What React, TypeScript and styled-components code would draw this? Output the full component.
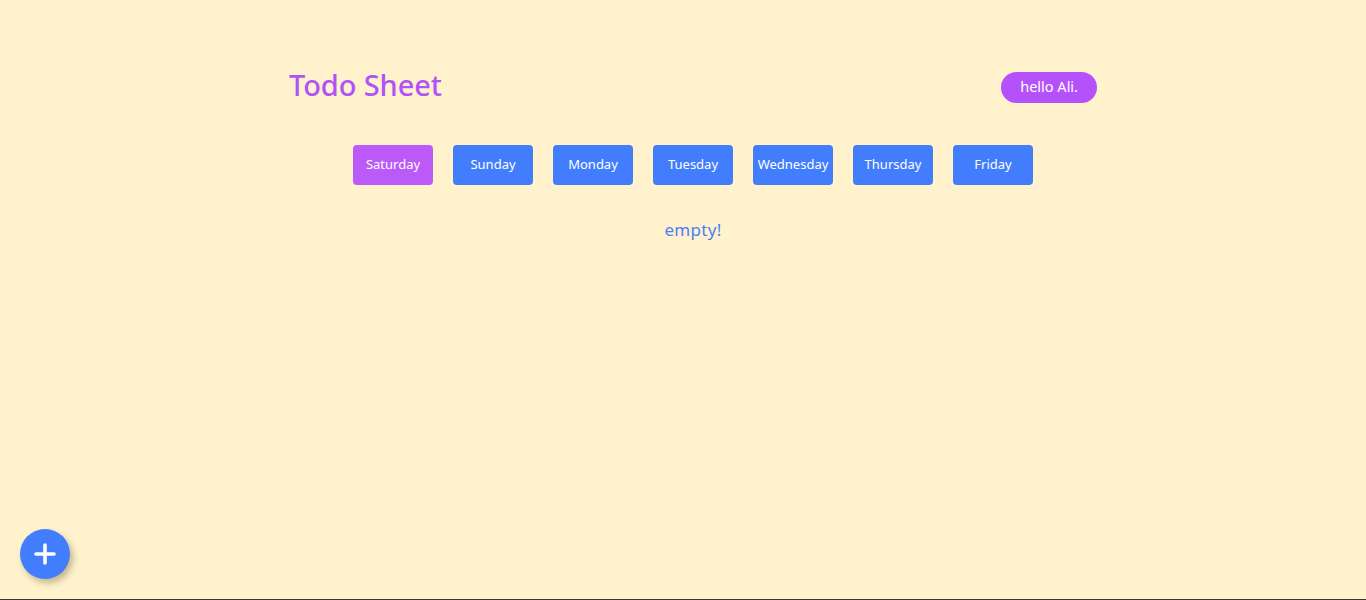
import React, { useState } from "react";
import styled, { createGlobalStyle } from "styled-components";

const Global = createGlobalStyle`
  html, body { margin: 0; padding: 0; background: #fff2cc; }
  body { font-family: "Noto Sans", "Open Sans", sans-serif; }
  * { box-sizing: border-box; }
`;

const Page = styled.div`
  min-height: 600px;
  background: #fff2cc;
  padding: 0 0 0 20px;
  border-bottom: 1px solid #3b3630;
`;

const Main = styled.main`
  width: 808px;
  margin: 0 auto;
  padding-top: 70px;
`;

const Header = styled.header`
  display: flex;
  align-items: center;
  justify-content: space-between;
  height: 33px;
`;

const Title = styled.h1`
  margin: 0 0 4px;
  font-size: 29px;
  font-weight: 500;
  color: #b052f6;
  letter-spacing: -0.1px;
  line-height: 33px;
`;

const Greeting = styled.div`
  height: 31px;
  padding: 0 19px 4px 19px;
  border-radius: 16px;
  background: #b451fa;
  color: #fff;
  font-size: 14.5px;
  display: flex;
  align-items: center;
  margin-top: 2px;
`;

const Days = styled.nav`
  display: flex;
  justify-content: center;
  gap: 20px;
  margin-top: 42px;
`;

const DayButton = styled.button<{ $active?: boolean }>`
  width: 80px;
  height: 40px;
  border: none;
  border-radius: 4px;
  background: ${(p) => (p.$active ? "#bb59f9" : "#427dfe")};
  color: #fff;
  font-family: inherit;
  font-size: 13px;
  padding: 0 0 2px;
  cursor: pointer;
`;

const Empty = styled.p`
  margin: 33px 0 0;
  text-align: center;
  color: #4a7ff9;
  font-size: 17px;
  letter-spacing: 0.3px;
`;

const Fab = styled.button`
  position: fixed;
  left: 20px;
  top: 529px;
  width: 50px;
  height: 50px;
  border-radius: 50%;
  border: none;
  background: #427dfe;
  box-shadow: 3px 4px 6px rgba(90, 70, 30, 0.35);
  display: flex;
  align-items: center;
  justify-content: center;
  padding: 0;
  cursor: pointer;
`;

const days = ["Saturday", "Sunday", "Monday", "Tuesday", "Wednesday", "Thursday", "Friday"];

export default function App() {
  const [active, setActive] = useState("Saturday");
  return (
    <>
      <Global />
      <Page>
        <Main>
          <Header>
            <Title>Todo Sheet</Title>
            <Greeting>hello Ali.</Greeting>
          </Header>
          <Days>
            {days.map((d) => (
              <DayButton key={d} $active={d === active} onClick={() => setActive(d)}>
                {d}
              </DayButton>
            ))}
          </Days>
          <Empty>empty!</Empty>
        </Main>
        <Fab aria-label="add">
          <svg width="24" height="24" viewBox="0 0 24 24">
            <path d="M12 3v18M3 12h18" stroke="#fff" strokeWidth="3.6" strokeLinecap="round" />
          </svg>
        </Fab>
      </Page>
    </>
  );
}
